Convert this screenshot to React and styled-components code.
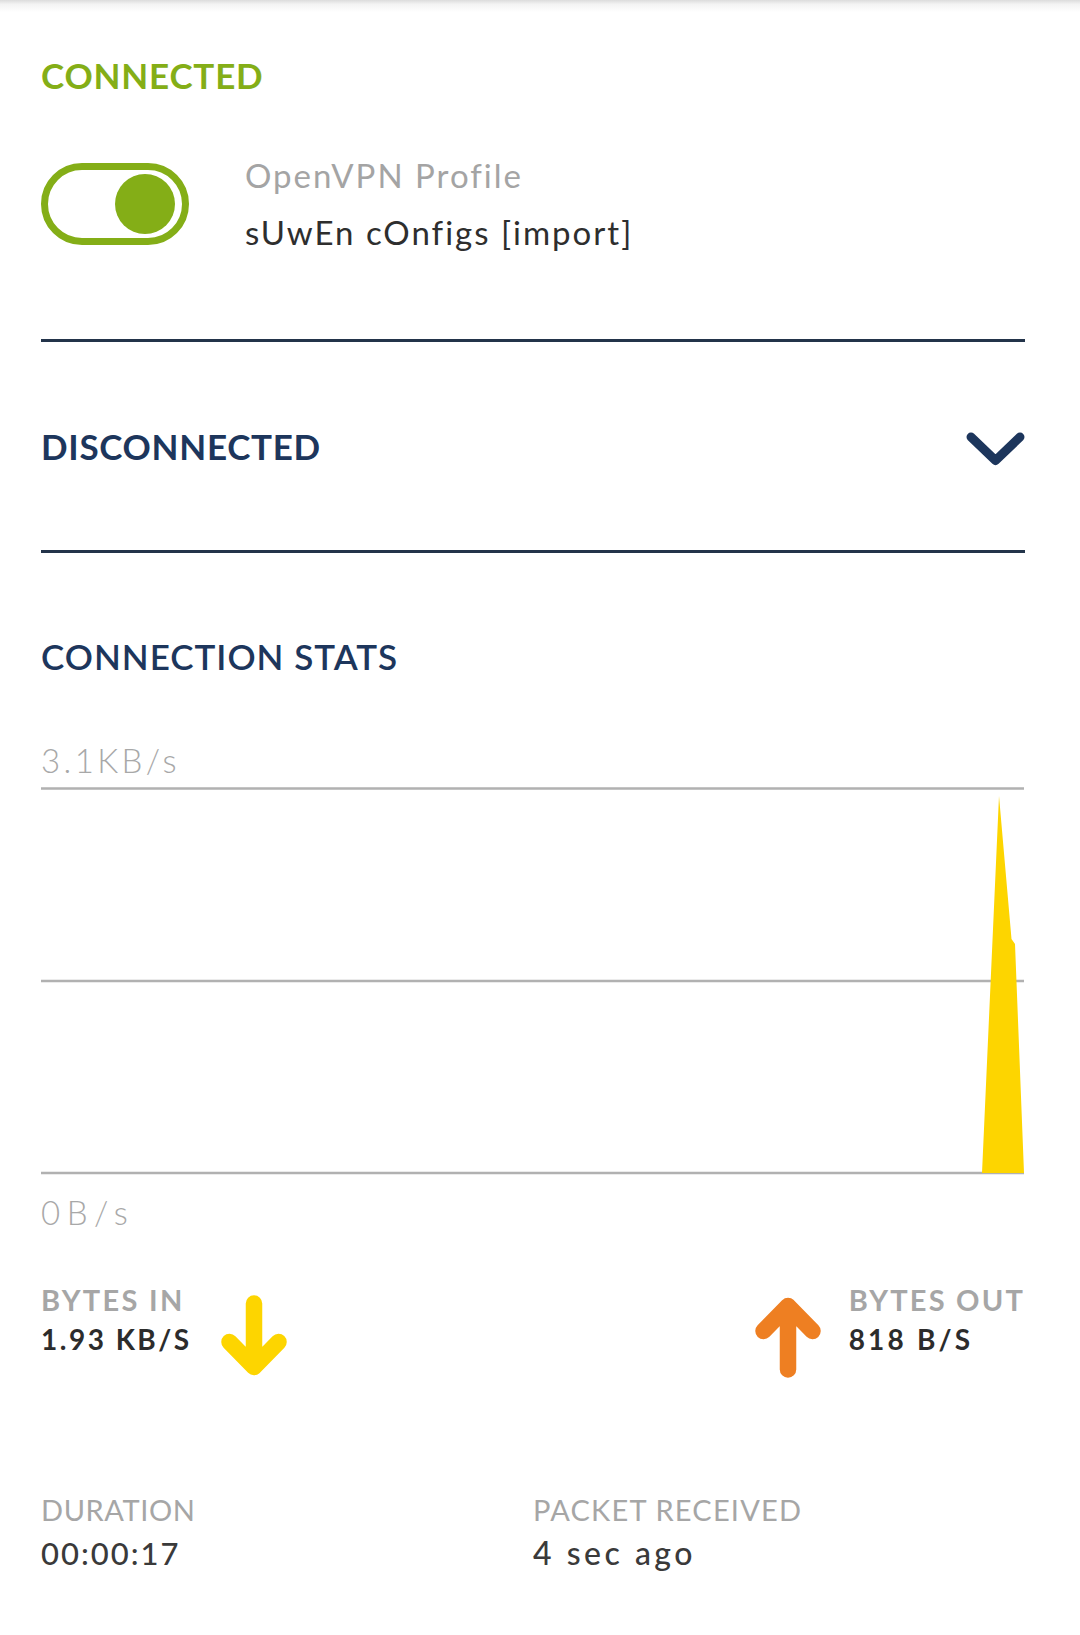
import React from "react";
import styled, { createGlobalStyle } from "styled-components";

const Global = createGlobalStyle`
  html, body { margin: 0; padding: 0; background: #ffffff; }
  body { font-family: Lato, "Open Sans", "Liberation Sans", sans-serif; -webkit-font-smoothing: antialiased; }
  * { box-sizing: border-box; }
`;

const GREEN = "#84ae17";
const NAVY = "#1d365c";

const Page = styled.div`
  width: 1080px;
  min-height: 1635px;
  background: #fff;
  position: relative;
`;

const TopShade = styled.div`
  height: 12px;
  background: linear-gradient(#dcdcdc 0%, #f3f3f3 35%, #ffffff 100%);
`;

const Content = styled.main`
  padding: 0 55px 0 41px;
`;

const StatusTitle = styled.h1`
  margin: 42px 0 0;
  font-size: 35px;
  line-height: 42px;
  font-weight: 700;
  color: ${GREEN};
  letter-spacing: 0.8px;
`;

const ProfileRow = styled.section`
  display: flex;
  align-items: center;
  margin-top: 51px;
  height: 114px;
`;

const Toggle = styled.div`
  width: 148px;
  height: 82px;
  border: 7.5px solid ${GREEN};
  border-radius: 41px;
  display: flex;
  align-items: center;
  justify-content: flex-end;
  padding-right: 7.5px;
  flex: none;
`;

const Knob = styled.span`
  width: 60px;
  height: 60px;
  border-radius: 50%;
  background: ${GREEN};
`;

const ProfileText = styled.div`
  margin-left: 56px;
  display: flex;
  flex-direction: column;
`;

const ProfileLine = styled.span`
  display: block;
  font-size: 33px;
  line-height: 57px;
  font-weight: 400;
  color: ${(p) => (p.$muted ? "#a4a4a4" : "#2e2e2e")};
  letter-spacing: 2px;
`;

const Divider = styled.hr`
  margin: ${(p) => p.$top || 0}px 0 0;
  border: 0;
  height: 3px;
  background: #23344a;
`;

const AccordionRow = styled.div`
  height: 208px;
  display: flex;
  align-items: center;
  justify-content: space-between;
`;

const AccordionTitle = styled.h2`
  margin: 0;
  font-size: 35px;
  line-height: 42px;
  font-weight: 700;
  color: ${NAVY};
  letter-spacing: 0.7px;
`;

const ChevronSlot = styled.div`
  padding-top: 5px;
  svg { display: block; }
`;

const SectionTitle = styled.h2`
  margin: 82px 0 0;
  font-size: 35px;
  line-height: 42px;
  font-weight: 600;
  color: ${NAVY};
  letter-spacing: 1px;
`;

const AxisLabel = styled.div`
  margin-top: ${(p) => p.$top}px;
  font-size: 33px;
  line-height: 38px;
  font-weight: 300;
  color: #a8a8a8;
  letter-spacing: ${(p) => p.$ls};
`;

const ChartBox = styled.div`
  margin-top: 8px;
  height: 388px;
  svg { display: block; }
`;

const BytesRow = styled.section`
  margin-top: 52px;
  display: flex;
  justify-content: space-between;
  align-items: flex-start;
`;

const BytesGroup = styled.div`
  display: flex;
  align-items: flex-start;
  gap: ${(p) => p.$gap}px;
`;

const Stat = styled.div`
  display: flex;
  flex-direction: column;
`;

const StatLabel = styled.span`
  font-size: 29px;
  line-height: 34px;
  font-weight: ${(p) => (p.$strong ? 700 : 400)};
  color: #a6a6a6;
  letter-spacing: ${(p) => p.$ls || "0.6px"};
`;

const StatValue = styled.span`
  margin-top: ${(p) => p.$top || 5}px;
  font-size: ${(p) => p.$size || 28}px;
  line-height: ${(p) => p.$lh || 34}px;
  font-weight: ${(p) => p.$weight || 700};
  color: ${(p) => p.$color || "#2c2c2c"};
  letter-spacing: ${(p) => p.$ls || "2.5px"};
`;

const ArrowSlot = styled.div`
  margin-top: 12px;
  width: 66px;
  height: 83px;
  svg { display: block; }
`;

const InfoGrid = styled.section`
  margin-top: 115px;
  display: grid;
  grid-template-columns: 1fr 1fr;
`;

const Chevron = () => (
  <svg width="59" height="34" viewBox="0 0 59 34" aria-hidden="true">
    <path d="M5 5 L29.5 28.5 L54 5" fill="none" stroke={NAVY} strokeWidth="9" strokeLinecap="round" strokeLinejoin="round" />
  </svg>
);

const Arrow = ({ up, color }) => (
  <svg width="66" height="83" viewBox="0 0 66 83" aria-hidden="true">
    <g transform={up ? "translate(0 83) scale(1 -1)" : undefined}>
      <path
        d="M33 8.5 V72 M8.5 47 L33 72 L57.5 47"
        fill="none"
        stroke={color}
        strokeWidth="16.5"
        strokeLinecap="round"
        strokeLinejoin="round"
      />
    </g>
  </svg>
);

const TrafficChart = () => (
  <svg width="984" height="388" viewBox="0 0 984 388" aria-hidden="true">
    <line x1="0" y1="1.5" x2="983" y2="1.5" stroke="#b1b1b1" strokeWidth="2.6" />
    <line x1="0" y1="194" x2="983" y2="194" stroke="#b1b1b1" strokeWidth="2.6" />
    <line x1="0" y1="386" x2="983" y2="386" stroke="#b1b1b1" strokeWidth="2.6" />
    <polygon points="941,386 958,9 970.5,152 974,157 983,386" fill="#fdd500" />
  </svg>
);

export default function App() {
  return (
    <Page>
      <Global />
      <TopShade />
      <Content>
        <StatusTitle>CONNECTED</StatusTitle>
        <ProfileRow>
          <Toggle>
            <Knob />
          </Toggle>
          <ProfileText>
            <ProfileLine $muted>OpenVPN Profile</ProfileLine>
            <ProfileLine>sUwEn cOnfigs [import]</ProfileLine>
          </ProfileText>
        </ProfileRow>

        <Divider $top={78} />
        <AccordionRow>
          <AccordionTitle>DISCONNECTED</AccordionTitle>
          <ChevronSlot>
            <Chevron />
          </ChevronSlot>
        </AccordionRow>
        <Divider />

        <SectionTitle>CONNECTION STATS</SectionTitle>
        <AxisLabel $top={64} $ls="3.4px">3.1KB/s</AxisLabel>
        <ChartBox>
          <TrafficChart />
        </ChartBox>
        <AxisLabel $top={18} $ls="6.5px">0B/s</AxisLabel>

        <BytesRow>
          <BytesGroup $gap={29}>
            <Stat>
              <StatLabel $strong $ls="2.3px">BYTES IN</StatLabel>
              <StatValue>1.93 KB/S</StatValue>
            </Stat>
            <ArrowSlot>
              <Arrow color="#fdd500" />
            </ArrowSlot>
          </BytesGroup>
          <BytesGroup $gap={28}>
            <ArrowSlot>
              <Arrow up color="#ee7f22" />
            </ArrowSlot>
            <Stat>
              <StatLabel $strong $ls="2.2px">BYTES OUT</StatLabel>
              <StatValue $ls="3.2px">818 B/S</StatValue>
            </Stat>
          </BytesGroup>
        </BytesRow>

        <InfoGrid>
          <Stat>
            <StatLabel $ls="0.6px">DURATION</StatLabel>
            <StatValue $top={8} $size={31} $lh={36} $weight={500} $color="#3a3a3a" $ls="2px">00:00:17</StatValue>
          </Stat>
          <Stat>
            <StatLabel $ls="1.2px">PACKET RECEIVED</StatLabel>
            <StatValue $top={8} $size={32} $lh={36} $weight={500} $color="#3a3a3a" $ls="3.5px">4 sec ago</StatValue>
          </Stat>
        </InfoGrid>
      </Content>
    </Page>
  );
}
